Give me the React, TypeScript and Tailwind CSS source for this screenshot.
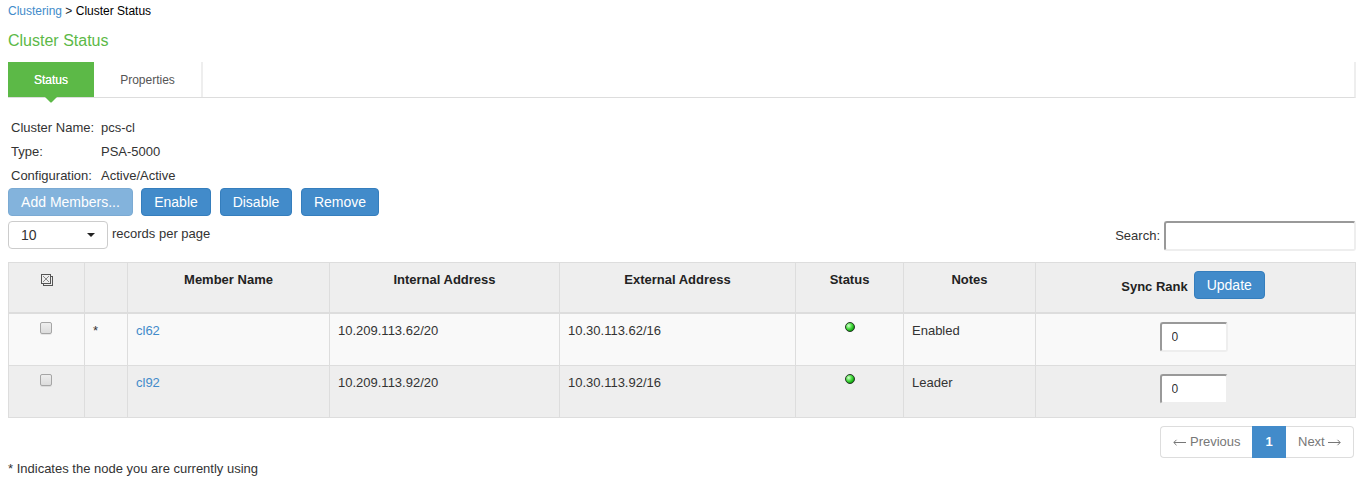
import React from "react";

const columns = "grid grid-cols-[76px_43px_202px_230px_236px_108px_132px_320px]";
const headCell = "border-r border-b-2 border-[#ddd] pt-[7px] text-center font-bold leading-[19px] text-[#222]";
const cell = "border-r border-b border-[#ddd] px-2 pt-[7px] leading-[19px]";
const button =
  "h-7 rounded-[4px] border border-[#357ebd] bg-[#428bca] text-center text-[14px] leading-[26px] text-white";

const members = [
  { name: "cl62", current: true, internal: "10.209.113.62/20", external: "10.30.113.62/16", notes: "Enabled" },
  { name: "cl92", current: false, internal: "10.209.113.92/20", external: "10.30.113.92/16", notes: "Leader" },
];

function SelectAllIcon() {
  return (
    <svg width="12" height="12" viewBox="0 0 12 12" shapeRendering="crispEdges" className="block">
      <path d="M2 11h10v1H2zM11 2h1v10h-1zM10 2h2v1h-2zM2 10h1v2H2z" fill="#555" />
      <path d="M0 0h10v10H0z" fill="#555" />
      <path d="M1 1h8v8H1z" fill="#eee" />
      <path
        d="M2 2h1v1h-1zM3 3h1v1h-1zM4 4h2v2h-2zM6 3h1v1h-1zM7 2h1v1h-1zM3 6h1v1h-1zM2 7h1v1h-1zM6 6h1v1h-1zM7 7h1v1h-1z"
        fill="#888"
      />
    </svg>
  );
}

function StatusLight() {
  return (
    <svg width="10" height="10" viewBox="0 0 10 10" className="block">
      <defs>
        <radialGradient id="light" cx="0.36" cy="0.36" r="0.65">
          <stop offset="0" stopColor="#d4ffd0" />
          <stop offset="0.5" stopColor="#50e048" />
          <stop offset="1" stopColor="#059a05" />
        </radialGradient>
      </defs>
      <circle cx="5" cy="5" r="4.5" fill="url(#light)" stroke="#2b382b" strokeWidth="1" />
    </svg>
  );
}

function Checkbox() {
  return (
    <div
      role="checkbox"
      aria-checked="false"
      className="h-3 w-3 rounded-[2px] border border-[#a5a5a5] bg-linear-to-b from-[#eee] to-[#dcdcdc] shadow-[0_1px_0_#00000014]"
    />
  );
}

function Arrow({ flip = false }: { flip?: boolean }) {
  return (
    <svg
      width="13"
      height="7"
      viewBox="0 0 13 7"
      fill="none"
      stroke="#777"
      className={flip ? "inline-block -scale-x-100" : "inline-block"}
    >
      <path d="M1 3.5H13M3.5 0.8L0.8 3.5L3.5 6.2" />
    </svg>
  );
}

export default function App() {
  return (
    <div className="h-[495px] overflow-hidden bg-white pr-[9px] pl-2 font-['Liberation_Sans',Arial,sans-serif] text-[13px] text-[#333]">
      <div className="pt-[2px] text-[12px] leading-[18px] text-[#222]">
        <a className="text-[#428bca]">Clustering</a> &gt; <span className="text-black">Cluster Status</span>
      </div>
      <h1 className="pt-[11px] text-[16px] leading-[20px] text-[#5cb947]">Cluster Status</h1>

      <div className="mt-[11px] flex h-9 border-r-2 border-b border-r-[#eee] border-b-[#ddd] text-[12px] leading-[36px]">
        <div className="relative h-9 w-[86px]">
          <div className="h-[35px] bg-[#5cb947] text-center text-white [text-shadow:0_0_0.5px_#fff]">Status</div>
          <svg width="12" height="6" viewBox="0 0 12 6" className="absolute top-[35px] left-[37px]">
            <path d="M0 0H12L6.5 5.5H5.5Z" fill="#5cb947" />
          </svg>
        </div>
        <div className="h-[35px] w-[109px] border-r-2 border-[#eee] text-center text-[#555]">Properties</div>
      </div>

      <div className="grid grid-cols-[90px_1fr] pt-[18px] pl-[3px] leading-6">
        <div>Cluster Name:</div>
        <div>pcs-cl</div>
        <div>Type:</div>
        <div>PSA-5000</div>
        <div>Configuration:</div>
        <div>Active/Active</div>
      </div>

      <div className="flex gap-2 text-[14px]">
        <button className={`${button} w-[125px] opacity-65`}>Add Members...</button>
        <button className={`${button} w-[70px]`}>Enable</button>
        <button className={`${button} ml-px w-[72px]`}>Disable</button>
        <button className={`${button} ml-px w-[78px]`}>Remove</button>
      </div>

      <div className="mt-[5px] flex h-[41px] items-start">
        <div className="flex h-7 w-[100px] items-center justify-between rounded-[4px] border border-[#ccc] pr-3 pl-3 text-[14px]">
          <span>10</span>
          <svg width="8" height="4" viewBox="0 0 8 4">
            <path d="M0 0H8L4 4Z" fill="#222" />
          </svg>
        </div>
        <span className="ml-1 leading-[25px]">records per page</span>
        <span className="ml-auto leading-[29px]">Search:</span>
        <input
          aria-label="Search"
          className="ml-1 h-[30px] w-48 rounded-[3px] border-2 border-t-[#999] border-r-[#eee] border-b-[#eee] border-l-[#999] bg-white px-2"
        />
      </div>

      <div className="border-t border-l border-[#ddd]">
        <div className={`${columns} h-[51px] bg-[#eee]`}>
          <div className="flex justify-center border-r border-b-2 border-[#ddd] pt-[11px]">
            <SelectAllIcon />
          </div>
          <div className={headCell} />
          <div className={headCell}>Member Name</div>
          <div className={headCell}>Internal Address</div>
          <div className={headCell}>External Address</div>
          <div className={headCell}>Status</div>
          <div className={headCell}>Notes</div>
          <div className="flex items-start justify-center gap-[6px] border-r border-b-2 border-[#ddd] pt-2 pr-[5px] font-bold text-[#222]">
            <span className="leading-[31px]">Sync Rank</span>
            <button className={`${button} w-[71px] font-normal`}>Update</button>
          </div>
        </div>
        {members.map((m) => (
          <div key={m.name} className={`${columns} h-[52px] ${m.current ? "bg-[#f9f9f9]" : "bg-[#eee]"}`}>
            <div className="flex justify-center border-r border-b border-[#ddd] pt-2 pr-px">
              <Checkbox />
            </div>
            <div className={cell}>{m.current ? "*" : ""}</div>
            <div className={`${cell} text-[#428bca]`}>{m.name}</div>
            <div className={cell}>{m.internal}</div>
            <div className={cell}>{m.external}</div>
            <div className="flex justify-center border-r border-b border-[#ddd] pt-2">
              <StatusLight />
            </div>
            <div className={cell}>{m.notes}</div>
            <div className="flex justify-center border-r border-b border-[#ddd] pt-2 pr-1">
              <input
                aria-label={`Sync rank ${m.name}`}
                defaultValue="0"
                className="h-[30px] w-[68px] rounded-[3px] border-2 border-t-[#999] border-r-[#eee] border-b-[#eee] border-l-[#999] bg-white px-[10px] text-[12px]"
              />
            </div>
          </div>
        ))}
      </div>

      <div className="mt-2 flex h-8 justify-end pr-[2px] leading-[30px] text-[#777]">
        <div className="flex w-[92px] items-center gap-1 rounded-l-[4px] border border-r-0 border-[#ddd] pl-3">
          <Arrow />
          <span>Previous</span>
        </div>
        <div className="w-[34px] border border-[#428bca] bg-[#428bca] text-center font-bold text-white">1</div>
        <div className="flex w-[68px] items-center gap-[3px] rounded-r-[4px] border border-l-0 border-[#ddd] pl-3">
          <span>Next</span>
          <Arrow flip />
        </div>
      </div>
      <div className="leading-[21px]">* Indicates the node you are currently using</div>
    </div>
  );
}
